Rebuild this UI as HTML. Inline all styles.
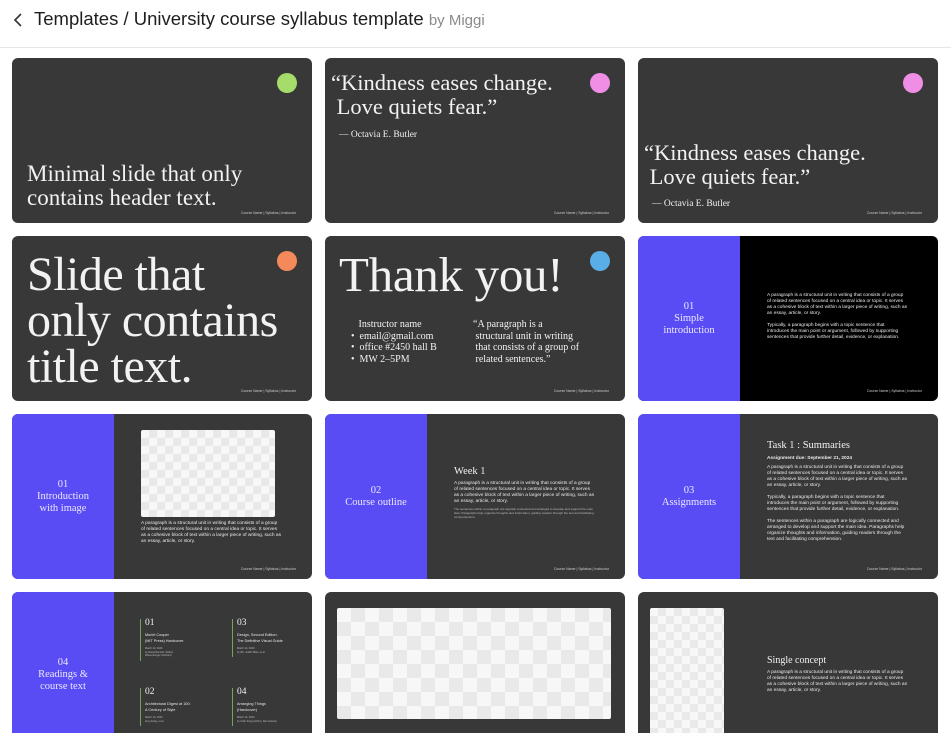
<!DOCTYPE html>
<html><head><meta charset="utf-8"><style>
*{margin:0;padding:0;box-sizing:border-box}
body{width:951px;height:743px;background:#fff;font-family:"Liberation Sans",sans-serif;position:relative;overflow:hidden}
.hdr{position:absolute;left:0;top:0;width:951px;height:48px;border-bottom:1px solid #e6e6e6}
.hdr .t{position:absolute;left:34px;top:8px;font-size:18.5px;color:#1e1e1e}
.hdr .t span{color:#8a8a8a;font-size:15px}
.hdr svg{position:absolute;left:12px;top:12px}
.clip{position:absolute;left:0;top:49px;width:951px;height:684px;overflow:hidden}
.c{position:absolute;width:300px;height:165px;background:#383838;border-radius:6px;overflow:hidden;color:#f2f2f2}
.s{font-family:"Liberation Serif",serif}
.dot{position:absolute;right:15px;top:15px;width:20px;height:20px;border-radius:50%}
.ft{position:absolute;right:16px;bottom:8px;font-size:3.5px;color:#ccc}
.bl{position:absolute;left:0;top:0;width:102px;height:100%;background:#5a4cf5}
.bl div{position:absolute;left:0;right:0;top:50%;transform:translateY(-50%);text-align:center;font-size:10.5px;line-height:12px;color:#eae8ff}
.p{position:absolute;font-size:4.8px;line-height:6px;color:#e8e8e8}
.ck{position:absolute;background-color:#f7f7f7;background-image:linear-gradient(45deg,#e9e9e9 25%,transparent 25%,transparent 75%,#e9e9e9 75%),linear-gradient(45deg,#e9e9e9 25%,transparent 25%,transparent 75%,#e9e9e9 75%);border-radius:2px}
</style></head><body>
<div class="hdr">
<svg width="12" height="16" viewBox="0 0 12 16"><path d="M9 2 L3 8 L9 14" fill="none" stroke="#333" stroke-width="1.6"/></svg>
<div class="t">Templates / University course syllabus template <span>by Miggi</span></div>
</div>
<div class="clip">
<div class="c" style="left:12px;top:9px">
<div class="dot" style="background:#a6dc6a"></div>
<div class="s" style="position:absolute;left:15px;top:104px;font-size:23px;line-height:24px">Minimal slide that only<br>contains header text.</div>
<div class="ft">Course Name | Syllabus | Instructor</div></div>
<div class="c" style="left:325px;top:9px">
<div class="dot" style="background:#f08ee6"></div>
<div class="s" style="position:absolute;left:6px;top:13px;font-size:22.5px;line-height:24px">“Kindness eases change.<br>&nbsp;Love quiets fear.”</div>
<div class="s" style="position:absolute;left:14px;top:72px;font-size:9.5px">— Octavia E. Butler</div>
<div class="ft">Course Name | Syllabus | Instructor</div></div>
<div class="c" style="left:638px;top:9px">
<div class="dot" style="background:#f08ee6"></div>
<div class="s" style="position:absolute;left:6px;top:83px;font-size:22.5px;line-height:24px">“Kindness eases change.<br>&nbsp;Love quiets fear.”</div>
<div class="s" style="position:absolute;left:14px;top:141px;font-size:9.5px">— Octavia E. Butler</div>
<div class="ft">Course Name | Syllabus | Instructor</div></div>
<div class="c" style="left:12px;top:187px">
<div class="dot" style="background:#f48a5a"></div>
<div class="s" style="position:absolute;left:15px;top:16px;font-size:48px;line-height:46px;letter-spacing:-0.5px">Slide that<br>only contains<br>title text.</div>
<div class="ft">Course Name | Syllabus | Instructor</div></div>
<div class="c" style="left:325px;top:187px">
<div class="dot" style="background:#5aaee8"></div>
<div class="s" style="position:absolute;left:14px;top:13px;font-size:49px;line-height:52px;letter-spacing:-0.3px">Thank you!</div>
<div class="s" style="position:absolute;left:26px;top:83px;font-size:10px;line-height:11.5px">&nbsp;&nbsp;&nbsp;Instructor name<br>•&nbsp; email@gmail.com<br>•&nbsp; office #2450 hall B<br>•&nbsp; MW 2–5PM</div>
<div class="s" style="position:absolute;left:148px;top:83px;font-size:10px;line-height:11.5px">“A paragraph is a<br>&nbsp;structural unit in writing<br>&nbsp;that consists of a group of<br>&nbsp;related sentences.”</div>
<div class="ft">Course Name | Syllabus | Instructor</div></div>
<div class="c" style="left:638px;top:187px;background:#000">
<div class="bl"><div class="s">01<br>Simple<br>introduction</div></div>
<div class="p" style="left:129px;top:57px;width:140px">A paragraph is a structural unit in writing that consists of a group of related sentences focused on a central idea or topic. It serves as a cohesive block of text within a larger piece of writing, such as an essay, article, or story.<br><br>Typically, a paragraph begins with a topic sentence that introduces the main point or argument, followed by supporting sentences that provide further detail, evidence, or explanation.</div>
<div class="ft">Course Name | Syllabus | Instructor</div></div>
<div class="c" style="left:12px;top:365px">
<div class="bl"><div class="s">01<br>Introduction<br>with image</div></div>
<div class="ck" style="left:129px;top:16px;width:134px;height:87px;background-size:16px 16px;background-position:0 0,8px 8px"></div>
<div class="p" style="left:129px;top:107px;width:140px">A paragraph is a structural unit in writing that consists of a group of related sentences focused on a central idea or topic. It serves as a cohesive block of text within a larger piece of writing, such as an essay, article, or story.</div>
<div class="ft">Course Name | Syllabus | Instructor</div></div>
<div class="c" style="left:325px;top:365px">
<div class="bl"><div class="s">02<br>Course outline</div></div>
<div class="s" style="position:absolute;left:129px;top:52px;font-size:10.5px">Week 1</div>
<div class="p" style="left:129px;top:67px;width:140px">A paragraph is a structural unit in writing that consists of a group of related sentences focused on a central idea or topic. It serves as a cohesive block of text within a larger piece of writing, such as an essay, article, or story.</div>
<div class="p" style="left:129px;top:93px;width:140px;font-size:3px;line-height:4px;color:#bbb">The sentences within a paragraph are logically connected and arranged to develop and support the main idea. Paragraphs help organize thoughts and information, guiding readers through the text and facilitating comprehension.</div>
<div class="ft">Course Name | Syllabus | Instructor</div></div>
<div class="c" style="left:638px;top:365px">
<div class="bl"><div class="s">03<br>Assignments</div></div>
<div class="s" style="position:absolute;left:129px;top:26px;font-size:10.5px">Task 1 : Summaries</div>
<div class="p" style="left:129px;top:42px;font-weight:bold">Assignment due: September 21, 2024</div>
<div class="p" style="left:129px;top:51px;width:140px">A paragraph is a structural unit in writing that consists of a group of related sentences focused on a central idea or topic. It serves as a cohesive block of text within a larger piece of writing, such as an essay, article, or story.<br><br>Typically, a paragraph begins with a topic sentence that introduces the main point or argument, followed by supporting sentences that provide further detail, evidence, or explanation.<br><br>The sentences within a paragraph are logically connected and arranged to develop and support the main idea. Paragraphs help organize thoughts and information, guiding readers through the text and facilitating comprehension.</div>
<div class="ft">Course Name | Syllabus | Instructor</div></div>
<div class="c" style="left:12px;top:543px">
<div class="bl"><div class="s">04<br>Readings &amp;<br>course text</div></div>
<div style="position:absolute;left:128px;top:27px;width:1px;height:42px;background:#7aa05a"></div>
<div style="position:absolute;left:220px;top:27px;width:1px;height:38px;background:#7aa05a"></div>
<div style="position:absolute;left:128px;top:96px;width:1px;height:38px;background:#7aa05a"></div>
<div style="position:absolute;left:220px;top:96px;width:1px;height:38px;background:#7aa05a"></div>
<div class="s" style="position:absolute;left:133px;top:26px;font-size:9.5px">01</div>
<div class="p" style="left:133px;top:41px;font-size:3.8px;line-height:5.5px">Muriel Cooper<br>(MIT Press) Hardcover.</div>
<div class="p" style="left:133px;top:55px;font-size:2.5px;line-height:3.5px;color:#bbb">March 14, 2023<br>by David Reinfurt, Robert<br>Wiesenberger (Authors)</div>
<div class="s" style="position:absolute;left:225px;top:26px;font-size:9.5px">03</div>
<div class="p" style="left:225px;top:41px;font-size:3.8px;line-height:5.5px">Design, Second Edition:<br>The Definitive Visual Guide</div>
<div class="p" style="left:225px;top:55px;font-size:2.5px;line-height:3.5px;color:#bbb">March 14, 2023<br>by DK, Judith Miller, et al.</div>
<div class="s" style="position:absolute;left:133px;top:95px;font-size:9.5px">02</div>
<div class="p" style="left:133px;top:110px;font-size:3.8px;line-height:5.5px">Architectural Digest at 100:<br>A Century of Style</div>
<div class="p" style="left:133px;top:124px;font-size:2.5px;line-height:3.5px;color:#bbb">March 14, 2023<br>Amy Astley, et al.</div>
<div class="s" style="position:absolute;left:225px;top:95px;font-size:9.5px">04</div>
<div class="p" style="left:225px;top:110px;font-size:3.8px;line-height:5.5px">Arranging Things<br>(Hardcover)</div>
<div class="p" style="left:225px;top:124px;font-size:2.5px;line-height:3.5px;color:#bbb">March 14, 2023<br>by Colin King (Author), Dan Gelman</div>
</div>
<div class="c" style="left:325px;top:543px">
<div class="ck" style="left:12px;top:16px;width:274px;height:111px;background-size:28px 28px;background-position:0 0,14px 14px"></div>
</div>
<div class="c" style="left:638px;top:543px">
<div class="ck" style="left:12px;top:16px;width:74px;height:160px;background-size:16px 16px;background-position:0 0,8px 8px"></div>
<div class="s" style="position:absolute;left:129px;top:63px;font-size:10px">Single concept</div>
<div class="p" style="left:129px;top:78px;width:140px">A paragraph is a structural unit in writing that consists of a group of related sentences focused on a central idea or topic. It serves as a cohesive block of text within a larger piece of writing, such as an essay, article, or story.</div>
</div>
</div>
</body></html>
